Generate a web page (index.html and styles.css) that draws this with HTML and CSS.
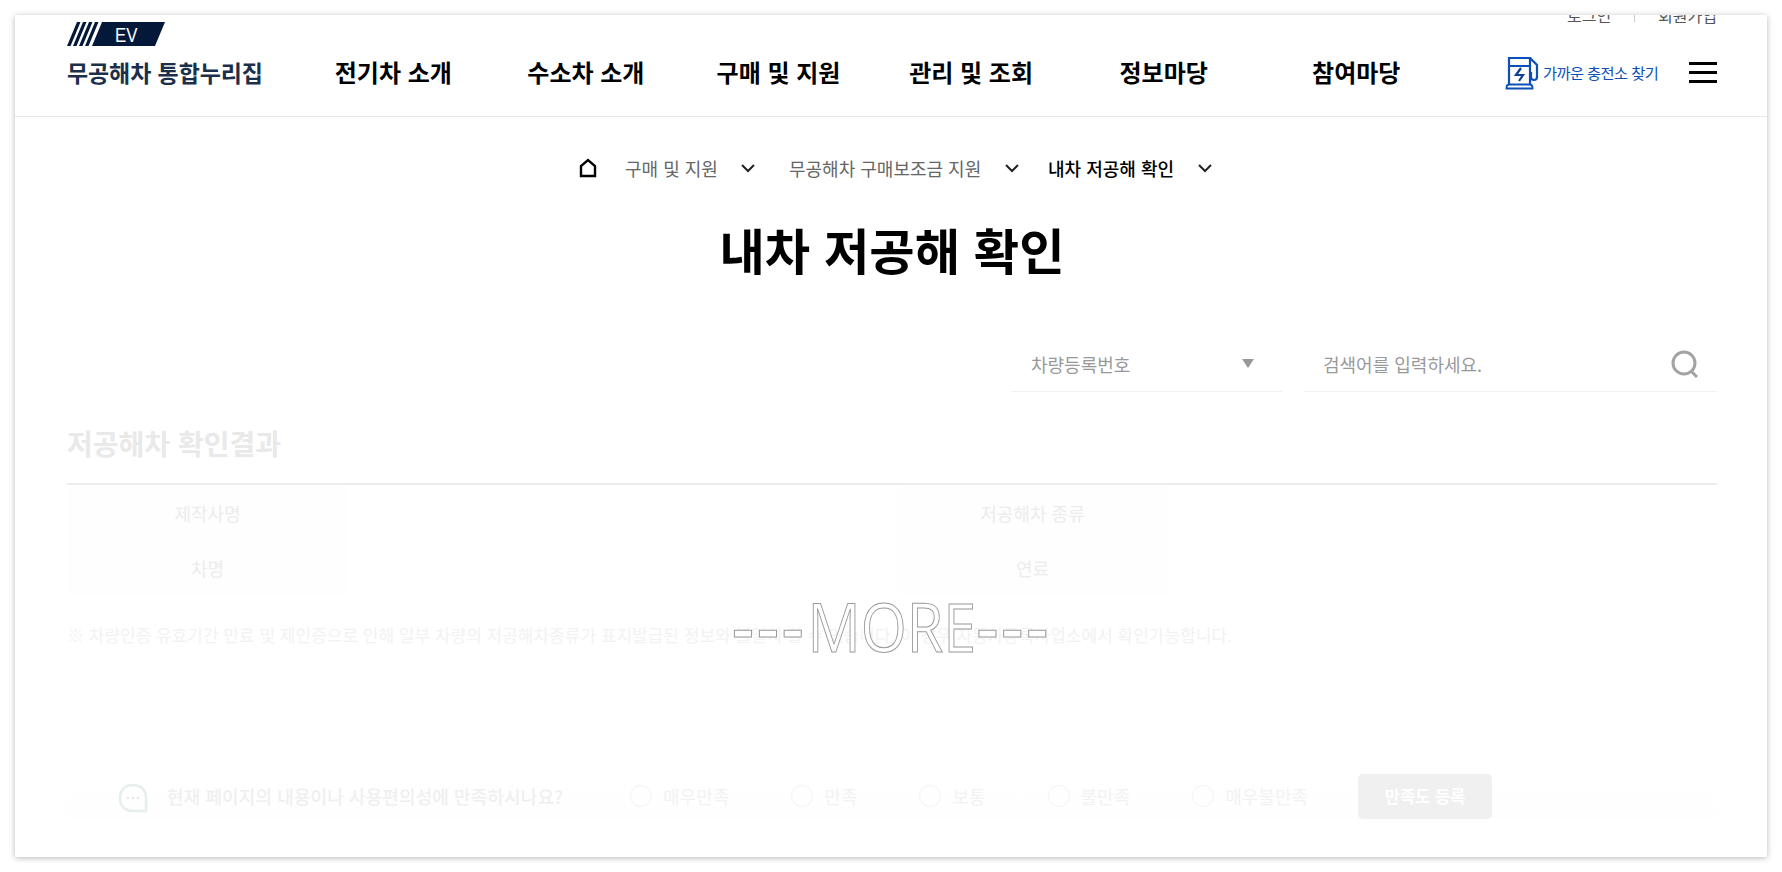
FILE: index.html
```html
<!DOCTYPE html>
<html lang="ko">
<head>
<meta charset="utf-8">
<title>내차 저공해 확인</title>
<link rel="stylesheet" href="styles.css">
</head>
<body>
<div class="card">
  <header class="header">
    <div class="util"><span>로그인</span><i class="util-sep"></i><span>회원가입</span></div>
    <div class="mainbar">
      <a class="logo">
        <svg class="logo-mark" width="98" height="24" viewBox="0 0 98 24"><path fill="#04193a" d="M0 24 10 0h3.500L3.500 24zM6 24 16 0h3.500L9.500 24zM12 24 22 0h3.500L15.500 24zM18 24 28 0h3.500L21.500 24zM25 24 35 0h63l-10 24z"/><text transform="translate(48 19.500) scale(.8 1)" class="logo-ev">EV</text></svg>
        <span class="logo-text">무공해차 통합누리집</span>
      </a>
      <nav class="gnb">
        <a>전기차 소개</a><a>수소차 소개</a><a>구매 및 지원</a><a>관리 및 조회</a><a>정보마당</a><a>참여마당</a>
      </nav>
      <a class="finder">
        <svg width="34" height="34" viewBox="0 0 34 34" fill="none" stroke="#0b50b8" stroke-width="2.200"><path d="M4 29V2h21v27M4 10h21"/><path d="M1.500 32.500v-1c0-2 1-3 3-3h20c2 0 3 1 3 3v1z" stroke-width="1.800"/><path d="M25 2l7 7v12a3 3 0 0 1-6 0v-5"/><path d="M16 12l-5 7h7l-4 6" stroke="#0a3f94"/></svg>
        <span class="finder-text">가까운 충전소 찾기</span>
      </a>
      <button class="burger" aria-label="전체메뉴"><i></i><i></i><i></i></button>
    </div>
  </header>

  <main class="content">
    <div class="crumbs">
      <svg class="home" width="18" height="20" viewBox="0 0 18 20" fill="none" stroke="#000" stroke-width="2.400"><path d="M2 18V8l7-6 7 6v10z"/></svg>
      <span class="crumb crumb-first">구매 및 지원</span>
      <svg class="chev chev-a" width="14" height="9" viewBox="0 0 14 9" fill="none" stroke="#222" stroke-width="2"><path d="M1 1l6 6 6-6"/></svg>
      <span class="crumb crumb-second">무공해차 구매보조금 지원</span>
      <svg class="chev chev-b" width="14" height="9" viewBox="0 0 14 9" fill="none" stroke="#222" stroke-width="2"><path d="M1 1l6 6 6-6"/></svg>
      <span class="crumb crumb-current">내차 저공해 확인</span>
      <svg class="chev chev-c" width="14" height="9" viewBox="0 0 14 9" fill="none" stroke="#222" stroke-width="2"><path d="M1 1l6 6 6-6"/></svg>
    </div>

    <h1 class="title">내차 저공해 확인</h1>

    <div class="search">
      <div class="select"><span>차량등록번호</span><i class="tri"></i></div>
      <div class="input"><span>검색어를 입력하세요.</span>
        <svg width="28" height="28" viewBox="0 0 28 28" fill="none" stroke="#a3a3a3" stroke-width="3"><circle cx="13" cy="13" r="11"/><path d="M20 21l6 6"/></svg>
      </div>
    </div>

    <h2 class="result-title">저공해차 확인결과</h2>
    <div class="table">
      <div class="th">제작사명</div><div class="td"></div><div class="th">저공해차 종류</div><div class="td"></div>
      <div class="th">차명</div><div class="td"></div><div class="th">연료</div><div class="td"></div>
    </div>
    <p class="note">※ 차량인증 유효기간 만료 및 제인증으로 인해 일부 차량의 저공해차종류가 표지발급된 정보와 불일치 할 수 있습니다. 이 경우 자동차등록사업소에서 확인가능합니다.</p>

    <div class="survey">
      <svg class="bubble" width="30" height="30" viewBox="0 0 30 30" fill="none"><path d="M15 2C7 2 2 7 2 15s5 13 13 13h13V15C28 7 23 2 15 2z" stroke="#e6efec" stroke-width="2.500"/><g fill="#e6e6e6"><circle cx="10" cy="15" r="1.300"/><circle cx="15" cy="15" r="1.300"/><circle cx="20" cy="15" r="1.300"/></g></svg>
      <span class="survey-q">현재 페이지의 내용이나 사용편의성에 만족하시나요?</span>
      <div class="opts">
        <label class="opt"><i></i>매우만족</label>
        <label class="opt"><i></i>만족</label>
        <label class="opt"><i></i>보통</label>
        <label class="opt"><i></i>불만족</label>
        <label class="opt"><i></i>매우불만족</label>
      </div>
      <button class="submit">만족도 등록</button>
    </div>
  </main>

  <div class="more"><span class="more-dash">---</span><span class="more-word">MORE</span><span class="more-dash">---</span></div>
</div>
</body>
</html>
```
FILE: styles.css
```css
* { box-sizing: border-box; }
html, body { margin: 0; padding: 0; background: #fff; }
body {
  height: 872px;
  padding: 15px;
  overflow: hidden;
  font-family: "Noto Sans CJK KR", "Noto Sans", sans-serif;
  color: #000;
}
.card {
  position: relative;
  height: 842px;
  background: #fff;
  overflow: hidden;
  box-shadow: 0 1px 6px rgba(0, 0, 0, .28);
}
.header { height: 102px; border-bottom: 1px solid #e8e8e8; position: relative; }
.util {
  position: absolute;
  right: 50px;
  top: -11px;
  display: flex;
  align-items: center;
  gap: 23px;
  font-size: 16px;
  line-height: 22px;
  color: #555;
}
.util-sep { width: 1px; height: 14px; background: #ccc; }
.mainbar { display: flex; align-items: flex-start; height: 100%; padding: 7px 50px 0 52px; }
.logo { width: 230px; flex: none; display: flex; flex-direction: column; }
.logo-mark { display: block; }
.logo-ev { font: 400 21px "Liberation Sans", sans-serif; fill: #fff; }
.logo-text {
  margin-top: 9px;
  font-size: 23px;
  line-height: 34px;
  font-weight: 700;
  color: #1c2f4a;
  letter-spacing: -.1px;
  white-space: nowrap;
}
.gnb {
  flex: none;
  display: grid;
  grid-template-columns: repeat(6, 192.6px);
  width: 1156px;
  margin-top: 27px;
}
.gnb a {
  text-align: center;
  font-size: 24px;
  line-height: 46px;
  font-weight: 700;
}
.finder {
  margin-left: 52px;
  margin-top: 34px;
  flex: none;
  display: flex;
  align-items: center;
  gap: 4px;
  color: #0b50b8;
  font-size: 15.300px;
  letter-spacing: -.6px;
  white-space: nowrap;
}
.finder-text { margin-top: -2px; }
.burger {
  margin-left: auto;
  margin-top: 40px;
  width: 28px;
  height: 21px;
  padding: 0;
  border: 0;
  background: none;
  display: flex;
  flex-direction: column;
  justify-content: space-between;
}
.burger i { display: block; height: 3px; background: #000; }
.content { padding: 0 50px 0 52px; }
.crumbs { position: relative; height: 92px; }
.crumbs > * { position: absolute; top: 36px; }
.home { left: 512px; top: 41px; }
.crumb { font-size: 18px; line-height: 30px; color: #666; white-space: nowrap; }
.crumb-first { left: 558px; }
.crumb-second { left: 722px; }
.crumb-current { left: 981px; color: #000; font-weight: 500; }
.chev { top: 47px; }
.chev-a { left: 674px; }
.chev-b { left: 938px; }
.chev-c { left: 1131px; }
.title {
  margin: 0;
  text-align: center;
  font-size: 49.300px;
  line-height: 80px;
  font-weight: 700;
}
.search { display: flex; justify-content: flex-end; gap: 22px; margin-top: 47px; }
.select, .input {
  height: 56px;
  border-bottom: 1px solid #f2f2f2;
  display: flex;
  align-items: center;
  justify-content: space-between;
  font-size: 18px;
  color: #999;
}
.select { width: 271px; padding: 0 28px 0 20px; }
.input { width: 413px; padding: 0 18px 0 19px; }
.tri { width: 0; height: 0; border: 6px solid transparent; border-top: 9px solid #999; border-bottom: 0; }
.result-title {
  margin: 30px 0 0;
  font-size: 28px;
  line-height: 42px;
  font-weight: 700;
  color: #e9e9e9;
}
.table {
  margin-top: 19px;
  border-top: 2px solid #ececec;
  display: grid;
  grid-template-columns: 281px 549px 271px 1fr;
  grid-auto-rows: 55px;
}
.th {
  display: flex;
  align-items: center;
  justify-content: center;
  background: #fefefe;
  font-size: 18px;
  color: #ececec;
}
.note {
  margin: 26px 0 0;
  font-size: 17px;
  line-height: 28px;
  color: #f2f2f2;
  white-space: nowrap;
}
.survey {
  margin-top: 124px;
  margin-left: -2px;
  display: flex;
  align-items: center;
  height: 46px;
  padding-left: 53px;
  background: linear-gradient(#fff, #fefefe);
}
.bubble { flex: none; margin-top: 3px; }
.survey-q { margin-left: 19px; font-size: 18px; font-weight: 500; color: #efefef; white-space: nowrap; letter-spacing: .1px; }
.opts { display: flex; margin-left: 67px; }
.opt { display: flex; align-items: center; gap: 11px; font-size: 18px; color: #f2f2f2; margin-right: 62px; white-space: nowrap; }
.opt:last-child { margin-right: 50px; }
.opt i { width: 22px; height: 22px; border-radius: 50%; border: 1px solid #f3f3f3; }
.submit {
  width: 134px;
  height: 45px;
  padding: 0;
  border: 0;
  border-radius: 5px;
  background: #f0f0f0;
  color: #fff;
  font: 700 16.500px "Noto Sans CJK KR", sans-serif;
}
.more {
  position: absolute;
  left: 717px;
  top: 566px;
  display: flex;
  font-family: "Open Sans", sans-serif;
  font-size: 68px;
  line-height: 90px;
  color: #fff;
  -webkit-text-stroke: 1px #999;
  white-space: nowrap;
}
.more-dash { letter-spacing: 3px; font-weight: 600; }
.more-word { display: inline-block; transform: scaleX(.87); margin: 0 -12px; }
```
